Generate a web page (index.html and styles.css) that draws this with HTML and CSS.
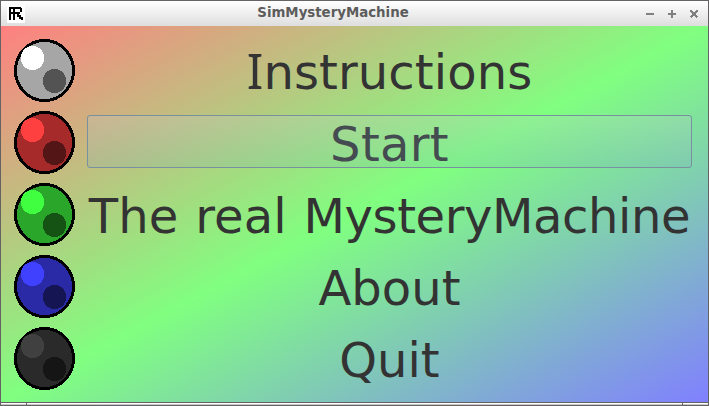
FILE: index.html
```html
<!DOCTYPE html>
<html lang="en">
<head>
<meta charset="utf-8">
<title>SimMysteryMachine</title>
<link rel="stylesheet" href="styles.css">
</head>
<body>
<svg class="defs" width="0" height="0" aria-hidden="true">
  <symbol id="ball" viewBox="0 0 62 64" shape-rendering="crispEdges">
    <ellipse cx="30.5" cy="31.5" rx="29" ry="30" fill="currentColor" stroke="#000" stroke-width="3"/>
    <ellipse class="light" cx="18.5" cy="19" rx="11.6" ry="12.2"/>
    <ellipse class="dark" cx="40.5" cy="42" rx="11.6" ry="12.2"/>
  </symbol>
</svg>
<div class="window">
  <header class="titlebar">
    <svg class="app-icon" width="18" height="18" viewBox="0 0 18 18">
      <path fill="#fff" d="M0 0h18v18H0z"/>
      <path fill="none" stroke="#000" stroke-width="2" d="M3 15V3H14M7 2v13M2 8h11M14 3v4M11 9v2h2v2h2v2"/>
    </svg>
    <h1 class="title">SimMysteryMachine</h1>
    <svg class="controls" width="56" height="12" viewBox="0 0 56 12" shape-rendering="crispEdges" stroke="#808080" stroke-width="2" fill="none">
      <path d="M0 6h8M22 6h8M26 2v8"/>
      <path d="M44.500 2.500l7 7M51.500 2.500l-7 7"/>
    </svg>
  </header>
  <main class="menu">
    <div class="row"><svg class="ball grey"><use href="#ball"/></svg><button class="item instructions"><span class="cap">I</span>nstructions</button></div>
    <div class="row"><svg class="ball red"><use href="#ball"/></svg><button class="item start active">Start</button></div>
    <div class="row"><svg class="ball green"><use href="#ball"/></svg><button class="item real">The real <span class="long">MysteryMachine</span></button></div>
    <div class="row"><svg class="ball blue"><use href="#ball"/></svg><button class="item about">About</button></div>
    <div class="row"><svg class="ball black"><use href="#ball"/></svg><button class="item quit">Quit</button></div>
  </main>
  <footer class="grip"><i></i><i></i><i></i></footer>
</div>
</body>
</html>
```
FILE: styles.css
```css
* { box-sizing: border-box; }
body { margin: 0; overflow: hidden; }
.defs { display: block; height: 0; }
.window {
  width: 709px;
  height: 406px;
  display: grid;
  grid-template-rows: 25px 376px 4px;
  border: 1px solid #656263;
  border-bottom: 0;
  font-family: "DejaVu Sans", sans-serif;
}
.titlebar {
  display: grid;
  grid-template-columns: 56px 1fr 56px;
  align-items: center;
  padding: 0 6px;
  background: linear-gradient(#fff, #dedede);
}
.app-icon { display: block; }
.title {
  margin: 0 0 2px;
  padding-right: 43px;
  text-align: center;
  font-size: 13.33px;
  line-height: 18px;
  color: #5c5c5c;
}
.menu {
  display: flex;
  flex-direction: column;
  padding: 8px 16px 8px 13px;
  background: linear-gradient(to bottom right, #ff8080, #80ff80 50%, #8080ff);
}
.row {
  height: 72px;
  display: flex;
  align-items: center;
  gap: 11px;
}
.ball { width: 62px; height: 64px; margin-top: 2px; flex: none; }
.grey { color: #a6a6a6; --light: #fff; --dark: #535353; }
.red { color: #a62a2a; --light: #ff4040; --dark: #531515; }
.green { color: #2aa62a; --light: #40ff40; --dark: #155315; }
.blue { color: #2a2aa6; --light: #4040ff; --dark: #151553; }
.black { color: #2a2a2a; --light: #404040; --dark: #151515; }
.light { fill: var(--light); }
.dark { fill: var(--dark); }
.item {
  flex: 1;
  height: 53px;
  margin-bottom: 1px;
  padding: 3px 0 0;
  border: 1px solid transparent;
  border-radius: 3px;
  background: none;
  font: 48px/50px "DejaVu Sans", sans-serif;
  white-space: nowrap;
  color: #333;
}
.cap { font-family: "Noto Sans", sans-serif; font-size: 49px; line-height: 1px; }
.instructions { letter-spacing: .1px; }
.start { letter-spacing: .3px; }
.real { letter-spacing: .1px; word-spacing: 1.5px; }
.long { letter-spacing: -.4px; }
.active {
  border-color: #7890a0;
  background: linear-gradient(rgba(190, 200, 205, .26), rgba(120, 170, 190, .2));
  color: #444b51;
}
.grip {
  display: grid;
  grid-template-columns: 25px 1fr 25px;
  gap: 1px;
  padding: 1px 0 0;
  background: #656263;
}
.grip i { height: 2px; border-top: 1px solid #fff; background: #c8c8c8; }
```
